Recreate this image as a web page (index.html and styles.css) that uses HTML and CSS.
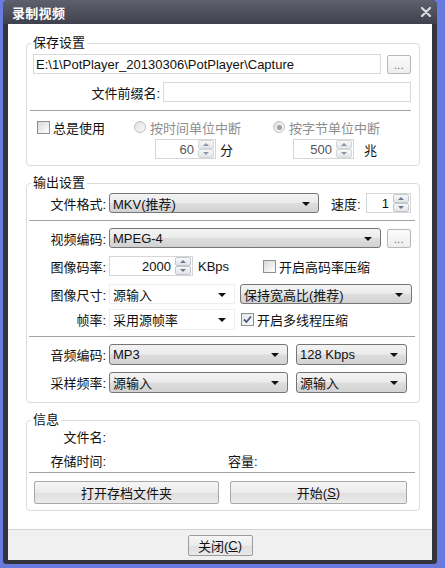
FILE: index.html
```html
<!DOCTYPE html>
<html lang="zh-CN">
<head>
<meta charset="utf-8">
<title>录制视频</title>
<link rel="stylesheet" href="styles.css">
</head>
<body>
<div class="window">
  <div class="titlebar">
    <span class="title">录制视频</span>
    <svg class="close" width="10" height="10" viewBox="0 0 10 10"><path d="M1 1L9 9M9 1L1 9" stroke="#d6d8de" stroke-width="2.4" stroke-linecap="round"/></svg>
  </div>
  <div class="client">
    <div class="main">
      <fieldset class="group g1">
        <legend>保存设置</legend>
        <div class="row h20">
          <div class="input path">E:\1\PotPlayer_20130306\PotPlayer\Capture</div>
          <button class="btn dots">...</button>
        </div>
        <div class="row h20 mt8">
          <span class="label w127">文件前缀名:</span>
          <div class="input grow"></div>
        </div>
        <div class="sep s1"></div>
        <div class="opts">
          <div class="cell c1"><span class="check"></span><span class="txt">总是使用</span></div>
          <div class="cell"><span class="radio"></span><span class="txt dis">按时间单位中断</span></div>
          <div class="cell"><span class="radio on"></span><span class="txt dis">按字节单位中断</span></div>
          <div class="cell"></div>
          <div class="cell sp1"><div class="spin dis w61"><span class="val">60</span><span class="spinbtns"><span class="sb up"></span><span class="sb dn"></span></span></div><span class="unit1">分</span></div>
          <div class="cell sp2"><div class="spin dis w61"><span class="val">500</span><span class="spinbtns"><span class="sb up"></span><span class="sb dn"></span></span></div><span class="unit2">兆</span></div>
        </div>
      </fieldset>

      <fieldset class="group g2">
        <legend>输出设置</legend>
        <div class="row h20">
          <span class="label">文件格式:</span>
          <div class="combo w210"><span class="ctext">MKV(推荐)</span><span class="arrow"></span></div>
          <span class="speed">速度:</span>
          <div class="spin w45 ml-auto"><span class="val">1</span><span class="spinbtns"><span class="sb up"></span><span class="sb dn"></span></span></div>
        </div>
        <div class="sep s2"></div>
        <div class="row h20 mt7">
          <span class="label">视频编码:</span>
          <div class="combo w272"><span class="ctext">MPEG-4</span><span class="arrow"></span></div>
          <button class="btn dots ml-auto">...</button>
        </div>
        <div class="row h20 mt8">
          <span class="label">图像码率:</span>
          <div class="bitrate">
            <div class="spin w84"><span class="val">2000</span><span class="spinbtns"><span class="sb up"></span><span class="sb dn"></span></span></div>
            <span class="kbps">KBps</span>
          </div>
          <span class="check"></span><span class="txt">开启高码率压缩</span>
        </div>
        <div class="row h20 mt8">
          <span class="label">图像尺寸:</span>
          <div class="combo flat w126"><span class="ctext">源输入</span><span class="arrow"></span></div>
          <div class="combo w172 ml5"><span class="ctext">保持宽高比(推荐)</span><span class="arrow"></span></div>
        </div>
        <div class="row h21 mt5">
          <span class="label">帧率:</span>
          <div class="combo flat w126"><span class="ctext">采用源帧率</span><span class="arrow"></span></div>
          <span class="check on ml6"><svg width="11" height="11" viewBox="0 0 11 11"><path d="M2 5.5L4.5 8L9 2.5" fill="none" stroke="#4b5a86" stroke-width="1.8"/></svg></span><span class="txt">开启多线程压缩</span>
        </div>
        <div class="sep s2 mt6"></div>
        <div class="row h21 mt7">
          <span class="label">音频编码:</span>
          <div class="combo w179"><span class="ctext">MP3</span><span class="arrow"></span></div>
          <div class="combo w111 ml8"><span class="ctext">128 Kbps</span><span class="arrow"></span></div>
        </div>
        <div class="row h21 mt7">
          <span class="label">采样频率:</span>
          <div class="combo w179"><span class="ctext">源输入</span><span class="arrow"></span></div>
          <div class="combo w111 ml8"><span class="ctext">源输入</span><span class="arrow"></span></div>
        </div>
      </fieldset>

      <fieldset class="group g3">
        <legend>信息</legend>
        <div class="row h14">
          <span class="label">文件名:</span>
        </div>
        <div class="row h14 mt10">
          <span class="label">存储时间:</span>
          <span class="cap">容量:</span>
        </div>
        <div class="sep s2 mt3"></div>
        <div class="row btnrow">
          <button class="btn big b1">打开存档文件夹</button>
          <button class="btn big b2">开始(<u>S</u>)</button>
        </div>
      </fieldset>
    </div>
    <div class="footer">
      <button class="btn closebtn">关闭(<u>C</u>)</button>
    </div>
  </div>
</div>
</body>
</html>
```

FILE: styles.css
```css
* { box-sizing: border-box; }
body {
  margin: 0;
  background: #6a7bdf;
  font: 13px "Liberation Sans", "Noto Sans CJK SC", sans-serif;
  color: #111;
}
.window {
  margin-left: 3px;
  width: 434px;
  height: 564px;
  background: #33353d;
  border-radius: 5px 5px 3px 3px;
  display: flex;
  flex-direction: column;
  overflow: hidden;
}
.titlebar {
  height: 24px;
  flex: none;
  display: flex;
  align-items: center;
  justify-content: space-between;
  padding: 0 6px 0 9px;
  background: linear-gradient(#5e616d, #3e414c);
}
.title {
  color: #fff;
  font-weight: bold;
  font-size: 13px;
  letter-spacing: 0.3px;
}
.close { margin-top: -1px; }
.client {
  margin: 0 5px 4px;
  flex: 1;
  background: #fff;
  display: flex;
  flex-direction: column;
}
.main {
  height: 505px;
  flex: none;
  padding: 0 12px 0 18px;
  overflow: hidden;
}
.footer {
  height: 31px;
  border-top: 1px solid #d3d3d3;
  background: #f0f0f0;
  display: flex;
  justify-content: center;
  padding-top: 5px;
}

/* group boxes */
.group {
  margin: 10px 0 0 0;
  border: 1px solid #dcdcdc;
  border-radius: 4px;
  padding: 4px 8px 6px 6px;
  min-width: 0;
}
.g1 { margin-top: 12px; padding-bottom: 6px; }
.g2 { padding-top: 3px; padding-bottom: 9px; }
.g3 { padding-top: 4px; padding-bottom: 6px; }
legend {
  padding: 0 2px;
  margin-left: -2px;
  line-height: 14px;
  font-size: 13px;
  color: #111;
}

.row { display: flex; align-items: center; }
.h20 { height: 20px; }
.h21 { height: 21px; }
.h14 { height: 14px; line-height: 14px; }
.mt3 { margin-top: 3px; }
.mt5 { margin-top: 5px; }
.mt6 { margin-top: 6px; }
.mt7 { margin-top: 7px; }
.mt8 { margin-top: 8px; }
.mt10 { margin-top: 10px; }
.ml5 { margin-left: 5px; }
.ml6 { margin-left: 6px; }
.ml8 { margin-left: 8px; }
.ml-auto { margin-left: auto; }

.label {
  width: 73px;
  flex: none;
  text-align: right;
  margin-right: 3px;
  white-space: nowrap;
}
.w127 { width: 127px; }

.sep { height: 1px; background: #a3a3a3; }
.s1 { margin: 8px 0 0 -3px; }
.s2 { margin: 7px -4px 0 -4px; }
.s2.mt6 { margin-top: 6px; }
.s2.mt3 { margin-top: 3px; }

/* inputs */
.input {
  height: 20px;
  border: 1px solid #d9d9d9;
  background: #fff;
  display: flex;
  align-items: center;
  padding-left: 2px;
  white-space: nowrap;
  overflow: hidden;
}
.path { width: 348px; flex: none; }
.grow { flex: 1; }

/* buttons */
.btn {
  font: inherit;
  color: #111;
  border: 1px solid #a9a9a9;
  border-radius: 2px;
  background: linear-gradient(#f6f6f6, #ebebeb 50%, #dfdfdf 51%, #e9e9e9);
  padding: 0;
  margin: 0;
  display: flex;
  align-items: center;
  justify-content: center;
}
.dots {
  width: 24px;
  height: 19px;
  margin-left: auto;
  border-color: #b8b8b8;
  background: linear-gradient(#fbfbfb, #eeeeee);
  font-size: 10px;
  color: #555;
  letter-spacing: 0.5px;
  padding-top: 2px;
}
.btnrow { margin-top: 8px; height: 23px; }
.big { height: 23px; }
.b1 { width: 185px; margin-left: 1px; }
.b2 { width: 177px; margin-left: 11px; }
.closebtn { width: 65px; height: 21px; border-color: #9c9c9c; }
u { text-decoration: underline; text-underline-offset: 1px; }

/* checkbox / radio */
.check {
  width: 13px;
  height: 13px;
  flex: none;
  border: 1px solid #8e8f8f;
  background: linear-gradient(135deg, #d8d8d8, #f4f4f4 70%, #fff);
  display: inline-flex;
  align-items: center;
  justify-content: center;
}
.check.on { background: linear-gradient(135deg, #e4e4e4, #fbfbfb); }
.radio {
  width: 12px;
  height: 12px;
  flex: none;
  border: 1px solid #c2c2c2;
  border-radius: 50%;
  background: linear-gradient(135deg, #e0e0e0, #fafafa);
  display: inline-flex;
  align-items: center;
  justify-content: center;
}
.radio.on::after {
  content: "";
  width: 5px;
  height: 5px;
  border-radius: 50%;
  background: #a0a0a0;
}
.txt { margin-left: 3px; white-space: nowrap; }
.radio + .txt { margin-left: 4px; }
.dis { color: #8e8e8e; }

/* options grid in group 1 */
.opts {
  display: grid;
  grid-template-columns: 101px 139px 1fr;
  grid-template-rows: 14px 20px;
  row-gap: 5px;
  margin-top: 9px;
}
.cell { display: flex; align-items: center; }
.c1 { padding-left: 4px; }
.sp1 { padding-left: 21px; }
.sp2 { padding-left: 20px; }
.unit1 { margin-left: 4px; }
.unit2 { margin-left: 10px; }

/* spinners */
.spin {
  height: 20px;
  flex: none;
  border: 1px solid #d6d6d6;
  background: #fff;
  display: flex;
  align-items: center;
  justify-content: flex-end;
  padding-right: 1px;
}
.spin .val { margin-right: 4px; }
.spin.dis .val { color: #555; }
.w61 { width: 61px; }
.w45 { width: 45px; }
.w84 { width: 84px; }
.spinbtns {
  width: 16px;
  height: 18px;
  display: flex;
  flex-direction: column;
  gap: 0;
}
.sb {
  flex: 1;
  border: 1px solid #c3c7ce;
  border-radius: 2px;
  background: linear-gradient(#f8f8f8, #e2e4e8);
  display: flex;
  align-items: center;
  justify-content: center;
}
.sb::after {
  content: "";
  width: 0;
  height: 0;
  border-left: 3px solid transparent;
  border-right: 3px solid transparent;
}
.sb.up::after { border-bottom: 3px solid #6a7895; }
.sb.dn::after { border-top: 3px solid #6a7895; }
.spin.dis .sb { border-color: #d4d6da; }
.spin.dis .sb.up::after { border-bottom-color: #8c96aa; }
.spin.dis .sb.dn::after { border-top-color: #8c96aa; }

/* combos */
.combo {
  height: 100%;
  flex: none;
  border: 1px solid #767676;
  border-radius: 3px;
  background: linear-gradient(#f3f3f3, #ebebeb 48%, #dddddd 52%, #d2d2d2);
  display: flex;
  align-items: center;
  padding: 0 8px 0 3px;
}
.combo.flat {
  border: 1px solid #eeeeee;
  border-radius: 0;
  background: #fff;
}
.ctext { flex: 1; white-space: nowrap; overflow: hidden; }
.arrow {
  width: 0;
  height: 0;
  border-left: 4px solid transparent;
  border-right: 4px solid transparent;
  border-top: 4px solid #111;
  margin-top: 1px;
}
.w210 { width: 210px; }
.w272 { width: 272px; }
.w126 { width: 126px; }
.w172 { width: 172px; }
.w179 { width: 179px; }
.w111 { width: 111px; }

.speed { margin-left: 12px; }
.bitrate { width: 154px; flex: none; display: flex; align-items: center; }
.kbps { margin-left: 5px; }
.cap { margin-left: 119px; }
```
